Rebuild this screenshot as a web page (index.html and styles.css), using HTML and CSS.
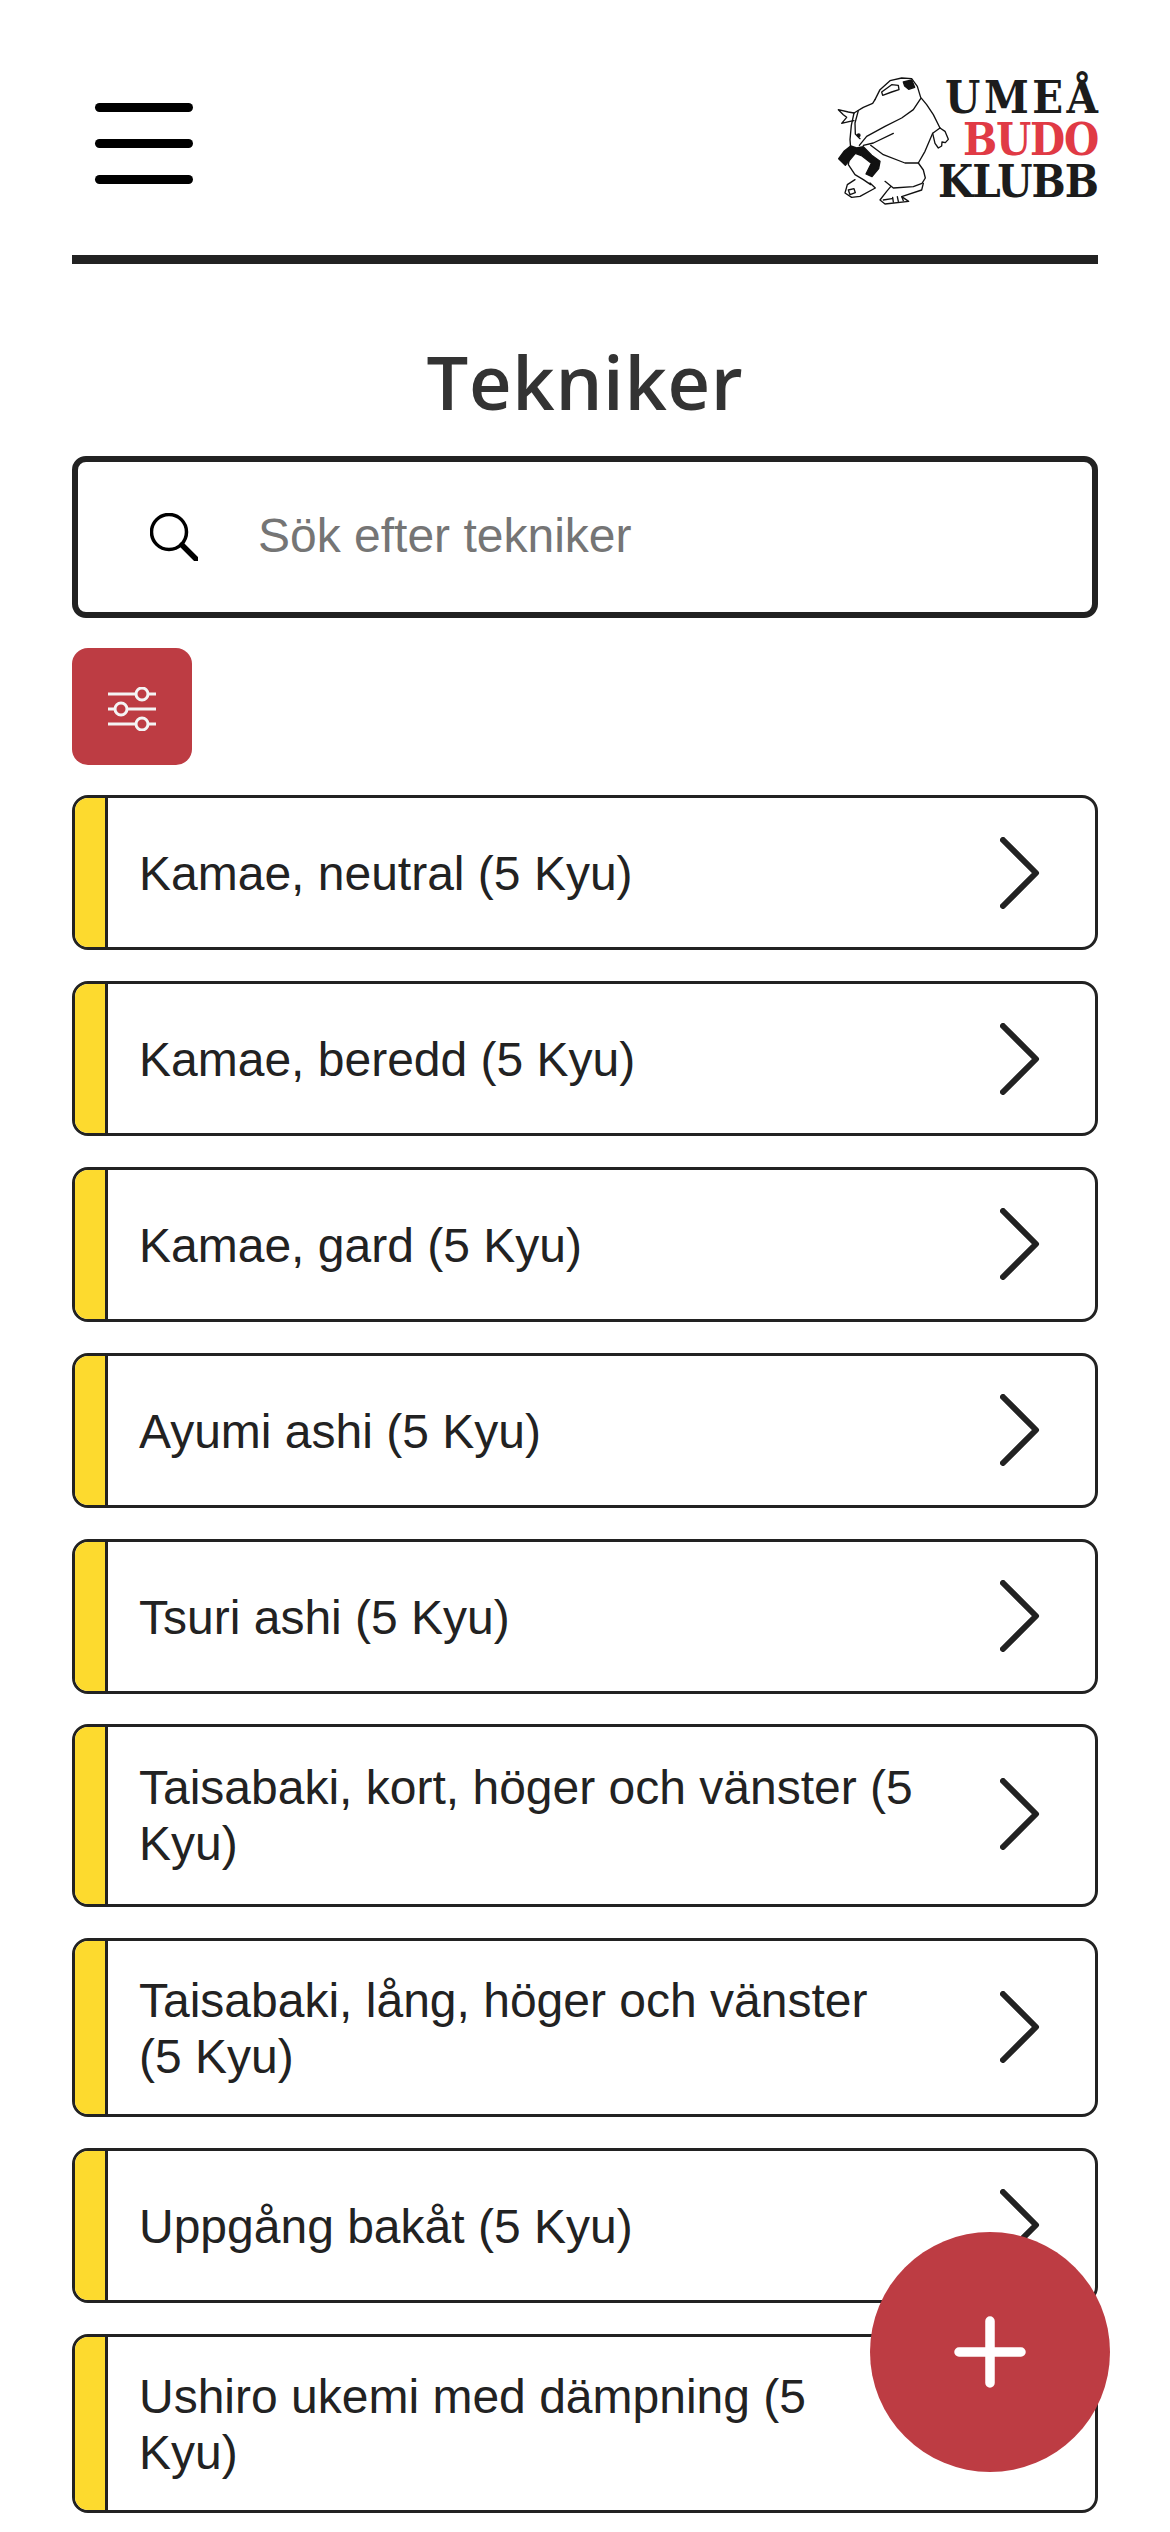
FILE: index.html
```html
<!DOCTYPE html>
<html lang="sv">
<head>
    <meta charset="UTF-8">
    <meta name="viewport" content="width=device-width, initial-scale=1.0">
    <title>Tekniker</title>
    <link rel="stylesheet" href="styles.css">
</head>
<body>

    <svg class="sprites" width="0" height="0">
        <symbol id="chevron" viewBox="0 0 42 72">
            <path d="M3 3 L36 36 L3 69" fill="none" stroke="#222" stroke-width="6" stroke-linecap="round" stroke-linejoin="round"/>
        </symbol>
    </svg>

    <div class="container">
        <header class="topbar">
            <button class="menu-btn" aria-label="Meny">
                <span></span>
                <span></span>
                <span></span>
            </button>
            <div class="logo">
                <svg class="logo-frog" viewBox="0 0 420 420" fill="none" stroke="#111" stroke-width="4" stroke-linecap="round" stroke-linejoin="round">
                    <!-- head and back -->
                    <path d="M135 95 L150 65 L180 38 L215 30 L245 32 L262 55 L272 88 L290 110 L310 140 L330 180"/>
                    <path d="M155 72 L185 50 L205 52 L207 65 L185 72 L158 82 Z"/>
                    <path d="M220 42 L245 36 L254 58 L236 64 L224 54 Z" fill="#111"/>
                    <path d="M135 95 L128 106 L100 118 L72 135"/>
                    <!-- left sleeve -->
                    <path d="M72 135 L55 132 L25 125 L40 140 L50 148 L35 166 L60 160 L72 158"/>
                    <path d="M72 135 L64 172 L60 215 L62 240"/>
                    <path d="M85 128 L75 165 L76 198 L90 212"/>
                    <circle cx="86" cy="202" r="4" fill="#111"/>
                    <!-- collar and lapels -->
                    <path d="M272 92 L250 125 L215 150 L165 175 L110 205 L88 232"/>
                    <path d="M100 232 L130 225 L190 196"/>
                    <path d="M122 232 L160 260 L225 285 L265 285"/>
                    <!-- right arm and hand -->
                    <path d="M330 180 L345 190 L355 214 L346 224 L336 222 L335 234 L325 240 L315 226 L308 196 L330 180"/>
                    <path d="M308 196 L285 250 L265 285 L280 306 L286 330 L276 346 L250 356 L190 360 L165 340"/>
                    <!-- legs and feet -->
                    <path d="M60 258 L55 290 L75 320 L100 335 L122 350"/>
                    <path d="M75 335 L52 350 L45 375 L65 388 L90 385 L136 360 L120 345"/>
                    <path d="M55 366 L72 362 L76 374 L60 380 Z"/>
                    <path d="M280 346 L275 366 L215 386 L236 400 L165 408 L150 396 L170 370 L182 356"/>
                    <path d="M188 388 L190 402 M202 386 L205 400 M216 388 L220 398 M160 396 L186 392"/>
                    <!-- belt -->
                    <path d="M42 250 L62 234 L80 240 L100 236 L125 262 L150 280 L146 302 L126 326 L108 318 L124 286 L96 264 L76 256 L46 292 L26 272 Z" fill="#111"/>
                </svg>
                <div class="logo-text">
                    <span class="logo-top">UMEÅ</span>
                    <span class="logo-red">BUDO</span>
                    <span class="logo-bottom">KLUBB</span>
                </div>
            </div>
        </header>

        <h1>Tekniker</h1>

        <div class="search">
            <svg class="search-icon" viewBox="0 0 48 48" fill="none" stroke="#000" stroke-linecap="round">
                <circle cx="19" cy="19" r="17.5" stroke-width="3.5"/>
                <path d="M32 32 L46 46" stroke-width="5.5"/>
            </svg>
            <input type="text" placeholder="Sök efter tekniker">
        </div>

        <button class="filter-btn" aria-label="Filter">
            <svg viewBox="0 0 48 44" fill="none" stroke="#f4f4f4" stroke-width="3">
                <path d="M0 7 H28 M40 7 H48 M0 22 H7 M19 22 H48 M0 37 H28 M40 37 H48"/>
                <circle cx="34" cy="7" r="6"/>
                <circle cx="13" cy="22" r="6"/>
                <circle cx="34" cy="37" r="6"/>
            </svg>
        </button>

        <ul class="tech-list">
            <li class="tech-item">
                <span class="belt"></span>
                <div class="tech-body"><span class="tech-name">Kamae, neutral (5 Kyu)</span><svg class="chevron"><use href="#chevron"/></svg></div>
            </li>
            <li class="tech-item">
                <span class="belt"></span>
                <div class="tech-body"><span class="tech-name">Kamae, beredd (5 Kyu)</span><svg class="chevron"><use href="#chevron"/></svg></div>
            </li>
            <li class="tech-item">
                <span class="belt"></span>
                <div class="tech-body"><span class="tech-name">Kamae, gard (5 Kyu)</span><svg class="chevron"><use href="#chevron"/></svg></div>
            </li>
            <li class="tech-item">
                <span class="belt"></span>
                <div class="tech-body"><span class="tech-name">Ayumi ashi (5 Kyu)</span><svg class="chevron"><use href="#chevron"/></svg></div>
            </li>
            <li class="tech-item">
                <span class="belt"></span>
                <div class="tech-body"><span class="tech-name">Tsuri ashi (5 Kyu)</span><svg class="chevron"><use href="#chevron"/></svg></div>
            </li>
            <li class="tech-item tech-item-tall">
                <span class="belt"></span>
                <div class="tech-body"><span class="tech-name">Taisabaki, kort, höger och vänster (5 Kyu)</span><svg class="chevron"><use href="#chevron"/></svg></div>
            </li>
            <li class="tech-item">
                <span class="belt"></span>
                <div class="tech-body"><span class="tech-name">Taisabaki, lång, höger och vänster (5 Kyu)</span><svg class="chevron"><use href="#chevron"/></svg></div>
            </li>
            <li class="tech-item">
                <span class="belt"></span>
                <div class="tech-body"><span class="tech-name">Uppgång bakåt (5 Kyu)</span><svg class="chevron"><use href="#chevron"/></svg></div>
            </li>
            <li class="tech-item">
                <span class="belt"></span>
                <div class="tech-body"><span class="tech-name">Ushiro ukemi med dämpning (5<br>Kyu)</span><svg class="chevron"><use href="#chevron"/></svg></div>
            </li>
        </ul>
    </div>

    <button class="add-btn" aria-label="Lägg till">
        <svg viewBox="0 0 72 72" fill="none" stroke="#fff" stroke-width="9.5" stroke-linecap="round">
            <path d="M36 5 V67 M5 36 H67"/>
        </svg>
    </button>

</body>
</html>
```

FILE: styles.css
```css
html, body {
    height: 2532px;
    overflow: hidden;
}
body {
    margin: 0;
    font-family: "Liberation Sans", Arial, sans-serif;
    background-color: #fff;
    color: #222;
}
button {
    border: none;
    padding: 0;
    cursor: pointer;
}
.sprites {
    display: block;
}
.container {
    padding: 0 72px;
}
.topbar {
    display: flex;
    justify-content: space-between;
    align-items: flex-end;
    height: 255px;
    border-bottom: 9px solid #222;
}
.menu-btn {
    display: flex;
    flex-direction: column;
    gap: 27px;
    width: 98px;
    margin: 0 0 71px 23px;
    background: none;
}
.menu-btn span {
    display: block;
    height: 9px;
    background: #000;
    border-radius: 5px;
}
.logo {
    display: flex;
    align-items: flex-start;
    margin-bottom: 47px;
}
.logo-frog {
    width: 140px;
    height: 140px;
    margin: -9px -32px 0 0;
}
.logo-text {
    display: flex;
    flex-direction: column;
    align-items: flex-end;
    font-family: "DejaVu Serif", serif;
    font-stretch: condensed;
    font-weight: bold;
    font-size: 45px;
    line-height: 42px;
    color: #1c1c1c;
}
.logo-top {
    letter-spacing: 3.5px;
    margin-right: -3.5px;
}
.logo-red {
    color: #e03a45;
    letter-spacing: -1.2px;
}
.logo-bottom {
    letter-spacing: -1px;
}
h1 {
    margin: 0;
    padding-top: 77px;
    height: 115px;
    font-family: "Open Sans", sans-serif;
    font-size: 74px;
    font-weight: 600;
    line-height: 82px;
    letter-spacing: 0.7px;
    text-align: center;
    color: #333;
}
.search {
    display: flex;
    align-items: center;
    box-sizing: border-box;
    height: 162px;
    border: 6px solid #222;
    border-radius: 14px;
    padding-left: 72px;
}
.search-icon {
    width: 48px;
    height: 48px;
    flex-shrink: 0;
}
.search input {
    flex: 1;
    min-width: 0;
    margin: 0 0 4px 60px;
    border: none;
    outline: none;
    padding: 0;
    font-family: "Liberation Sans", Arial, sans-serif;
    font-size: 48px;
    color: #222;
}
.search input::placeholder {
    color: #757575;
    opacity: 1;
}
.filter-btn {
    display: flex;
    align-items: center;
    justify-content: center;
    width: 120px;
    height: 117px;
    margin-top: 30px;
    padding-top: 5px;
    background: #bd3c43;
    border-radius: 16px;
}
.filter-btn svg {
    width: 48px;
    height: 44px;
}
.tech-list {
    list-style: none;
    margin: 30px 0 0;
    padding: 0;
    display: flex;
    flex-direction: column;
    gap: 30.6px;
}
.tech-item {
    display: flex;
    box-sizing: border-box;
    min-height: 155.3px;
    background: #fff;
    border: 3px solid #222;
    border-radius: 16px;
    overflow: hidden;
    font-size: 48px;
    line-height: 56px;
    color: #222;
}
.belt {
    flex: 0 0 30px;
    background: #fdda2e;
    border-right: 3px solid #222;
}
.tech-body {
    flex: 1;
    min-width: 0;
    display: flex;
    align-items: center;
    padding: 29.2px 53px 29.2px 31px;
}
.tech-item-tall .tech-body {
    padding-bottom: 32.5px;
}
.tech-name {
    flex: 1;
    min-width: 0;
    padding-top: 3px;
}
.chevron {
    width: 42px;
    height: 72px;
    flex-shrink: 0;
    margin-left: 80px;
}
.add-btn {
    position: fixed;
    left: 870px;
    top: 2232px;
    width: 240px;
    height: 240px;
    display: flex;
    align-items: center;
    justify-content: center;
    background: #bd3c43;
    border-radius: 50%;
}
.add-btn svg {
    width: 72px;
    height: 72px;
}
```
